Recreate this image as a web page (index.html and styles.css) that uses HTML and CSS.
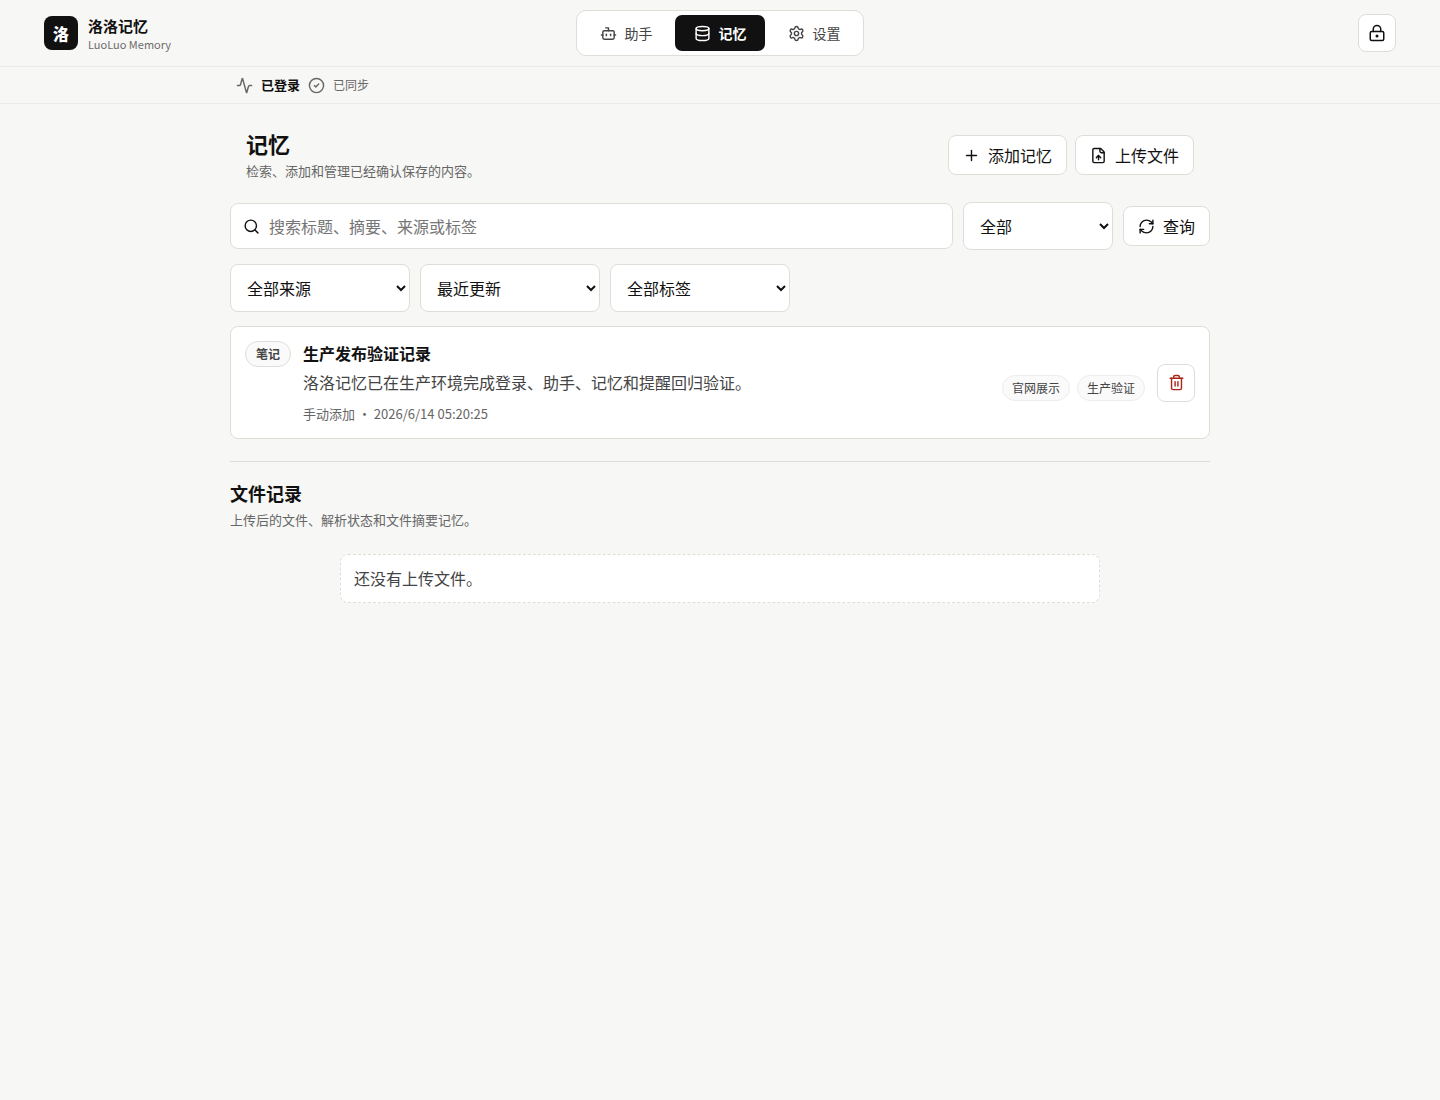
FILE: index.html
```html
<!DOCTYPE html>
<html lang="zh-CN">
<head>
    <meta charset="UTF-8">
    <meta name="viewport" content="width=device-width, initial-scale=1.0">
    <link rel="stylesheet" href="styles.css">
    <title>洛洛记忆</title>
</head>
<body>
    <header class="topbar">
        <div class="brand">
            <div class="logo">洛</div>
            <div class="brand-text">
                <div class="brand-name">洛洛记忆</div>
                <div class="brand-sub">LuoLuo Memory</div>
            </div>
        </div>
        <nav class="tabs">
            <button class="tab">
                <svg class="icon" viewBox="0 0 24 24"><path d="M12 8V4H8"/><rect width="16" height="12" x="4" y="8" rx="2"/><path d="M2 14h2"/><path d="M20 14h2"/><path d="M15 13v2"/><path d="M9 13v2"/></svg>
                助手
            </button>
            <button class="tab active">
                <svg class="icon" viewBox="0 0 24 24"><ellipse cx="12" cy="5" rx="9" ry="3"/><path d="M3 5V19A9 3 0 0 0 21 19V5"/><path d="M3 12A9 3 0 0 0 21 12"/></svg>
                记忆
            </button>
            <button class="tab">
                <svg class="icon" viewBox="0 0 24 24"><path d="M9.671 4.136a2.34 2.34 0 0 1 4.659 0 2.34 2.34 0 0 0 3.319 1.915 2.34 2.34 0 0 1 2.33 4.033 2.34 2.34 0 0 0 0 3.831 2.34 2.34 0 0 1-2.33 4.033 2.34 2.34 0 0 0-3.319 1.915 2.34 2.34 0 0 1-4.659 0 2.34 2.34 0 0 0-3.32-1.915 2.34 2.34 0 0 1-2.33-4.033 2.34 2.34 0 0 0 0-3.831A2.34 2.34 0 0 1 6.35 6.051a2.34 2.34 0 0 0 3.319-1.915"/><circle cx="12" cy="12" r="3"/></svg>
                设置
            </button>
        </nav>
        <button class="icon-button lock" aria-label="锁定">
            <svg class="icon icon-lg" viewBox="0 0 24 24"><circle cx="12" cy="16" r="1"/><rect x="3" y="10" width="18" height="12" rx="2"/><path d="M7 10V7a5 5 0 0 1 10 0v3"/></svg>
        </button>
    </header>

    <div class="status">
        <div class="status-inner">
            <svg class="icon" viewBox="0 0 24 24"><path d="M22 12h-2.48a2 2 0 0 0-1.93 1.46l-2.35 8.36a.25.25 0 0 1-.48 0L9.24 2.18a.25.25 0 0 0-.48 0l-2.35 8.36A2 2 0 0 1 4.49 12H2"/></svg>
            <strong>已登录</strong>
            <svg class="icon" viewBox="0 0 24 24"><circle cx="12" cy="12" r="10"/><path d="m9 12 2 2 4-4"/></svg>
            <span>已同步</span>
        </div>
    </div>

    <main class="page">
        <div class="page-head">
            <div>
                <h1>记忆</h1>
                <p class="hint">检索、添加和管理已经确认保存的内容。</p>
            </div>
            <div class="actions">
                <button class="button">
                    <svg class="icon" viewBox="0 0 24 24"><path d="M5 12h14"/><path d="M12 5v14"/></svg>
                    添加记忆
                </button>
                <button class="button">
                    <svg class="icon" viewBox="0 0 24 24"><path d="M15 2H6a2 2 0 0 0-2 2v16a2 2 0 0 0 2 2h12a2 2 0 0 0 2-2V7Z"/><path d="M14 2v4a2 2 0 0 0 2 2h4"/><path d="M12 12v6"/><path d="m15 15-3-3-3 3"/></svg>
                    上传文件
                </button>
            </div>
        </div>

        <div class="search-row">
            <label class="search">
                <svg class="icon" viewBox="0 0 24 24"><circle cx="11" cy="11" r="8"/><path d="m21 21-4.34-4.34"/></svg>
                <input type="text" placeholder="搜索标题、摘要、来源或标签" aria-label="搜索">
            </label>
            <select class="type" aria-label="类型">
                <option>全部</option>
            </select>
            <button class="button">
                <svg class="icon" viewBox="0 0 24 24"><path d="M3 12a9 9 0 0 1 9-9 9.75 9.75 0 0 1 6.74 2.74L21 8"/><path d="M21 3v5h-5"/><path d="M21 12a9 9 0 0 1-9 9 9.75 9.75 0 0 1-6.74-2.74L3 16"/><path d="M8 16H3v5"/></svg>
                查询
            </button>
        </div>

        <div class="filters">
            <select aria-label="来源">
                <option>全部来源</option>
            </select>
            <select aria-label="排序">
                <option>最近更新</option>
            </select>
            <select aria-label="标签">
                <option>全部标签</option>
            </select>
        </div>

        <article class="memory">
            <span class="pill kind">笔记</span>
            <div class="memory-body">
                <h3>生产发布验证记录</h3>
                <p>洛洛记忆已在生产环境完成登录、助手、记忆和提醒回归验证。</p>
                <div class="meta">手动添加 · 2026/6/14 05:20:25</div>
            </div>
            <div class="tags">
                <span class="pill">官网展示</span>
                <span class="pill">生产验证</span>
            </div>
            <button class="icon-button danger" aria-label="删除">
                <svg class="icon" viewBox="0 0 24 24"><path d="M3 6h18"/><path d="M19 6v14a2 2 0 0 1-2 2H7a2 2 0 0 1-2-2V6"/><path d="M8 6V4a2 2 0 0 1 2-2h4a2 2 0 0 1 2 2v2"/><path d="M10 11v6"/><path d="M14 11v6"/></svg>
            </button>
        </article>

        <section class="files">
            <h2>文件记录</h2>
            <p class="hint">上传后的文件、解析状态和文件摘要记忆。</p>
            <div class="empty">还没有上传文件。</div>
        </section>
    </main>
</body>
</html>
```

FILE: styles.css
```css
* {
    box-sizing: border-box;
}

body {
    margin: 0;
    min-height: 100vh;
    background: #f7f7f5;
    color: #111;
    font-family: "Noto Sans CJK SC", sans-serif;
    font-size: 16px;
    line-height: 24px;
}

h1, h2, h3, p {
    margin: 0;
}

button, input, select {
    font: inherit;
    color: inherit;
}

button {
    cursor: pointer;
}

.icon {
    width: 17px;
    height: 17px;
    flex: none;
    fill: none;
    stroke: currentColor;
    stroke-width: 2;
    stroke-linecap: round;
    stroke-linejoin: round;
}

.icon-lg {
    width: 18px;
    height: 18px;
}

/* top bar */
.topbar {
    display: grid;
    grid-template-columns: 1fr auto 1fr;
    align-items: center;
    padding: 10px 44px;
    border-bottom: 1px solid #ebebe8;
}

.brand {
    display: flex;
    align-items: center;
    gap: 10px;
}

.logo {
    display: grid;
    place-items: center;
    width: 34px;
    height: 34px;
    border-radius: 8px;
    background: #111;
    color: #fff;
    font-weight: 800;
}

.brand-text {
    padding-top: 2px;
}

.brand-name {
    font-size: 15px;
    font-weight: 700;
    line-height: 19px;
}

.brand-sub {
    color: #6b6b6b;
    font-size: 11px;
    line-height: 18px;
}

.tabs {
    display: flex;
    gap: 4px;
    padding: 4px;
    border: 1px solid #deded9;
    border-radius: 10px;
    background: #fff;
}

.tab {
    display: flex;
    align-items: center;
    justify-content: center;
    gap: 8px;
    width: 90px;
    height: 36px;
    padding: 0;
    border: 0;
    border-radius: 7px;
    background: none;
    color: #444;
    font-size: 14px;
}

.tab.active {
    background: #111;
    color: #fff;
    font-weight: 700;
}

.icon-button {
    display: grid;
    place-items: center;
    width: 38px;
    height: 38px;
    padding: 0;
    border: 1px solid #deded9;
    border-radius: 8px;
    background: #fff;
}

.lock {
    justify-self: end;
}

.danger {
    color: #a8261c;
}

/* status line */
.status {
    border-bottom: 1px solid #ebebe8;
}

.status-inner {
    display: flex;
    align-items: center;
    gap: 8px;
    max-width: 980px;
    height: 36px;
    margin: 0 auto;
    padding: 0 6px;
    color: #666;
    font-size: 12px;
}

.status-inner strong {
    color: #111;
    font-size: 13px;
}

/* page */
.page {
    max-width: 980px;
    margin: 0 auto;
    padding: 24px 0;
}

.page-head {
    display: flex;
    align-items: center;
    justify-content: space-between;
    padding: 0 16px;
    margin-bottom: 20px;
}

h1 {
    font-size: 22px;
    line-height: 30px;
}

.hint {
    margin-top: 2px;
    color: #666;
    font-size: 13px;
    line-height: 22px;
}

.actions {
    display: flex;
    gap: 8px;
}

.button {
    display: flex;
    align-items: center;
    gap: 8px;
    height: 40px;
    padding: 0 14px;
    border: 1px solid #deded9;
    border-radius: 8px;
    background: #fff;
    white-space: nowrap;
}

.search-row {
    display: flex;
    align-items: center;
    gap: 10px;
}

.search {
    display: flex;
    flex: 1;
    align-items: center;
    gap: 9px;
    height: 46px;
    padding: 0 12px;
    border: 1px solid #deded9;
    border-radius: 8px;
    background: #fff;
}

.search input {
    flex: 1;
    min-width: 0;
    padding: 0;
    border: 0;
    outline: 0;
    background: none;
}

.search input::placeholder {
    color: #757575;
}

select {
    width: 180px;
    height: 48px;
    padding: 0 12px;
    border: 1px solid #deded9;
    border-radius: 8px;
    background: #fff;
}

select.type {
    width: 150px;
}

.filters {
    display: flex;
    gap: 10px;
    margin: 14px 0;
}

.memory {
    display: flex;
    align-items: center;
    gap: 12px;
    padding: 14px;
    border: 1px solid #deded9;
    border-radius: 8px;
    background: #fff;
}

.pill {
    padding: 0 9px;
    border: 1px solid #ededed;
    border-radius: 13px;
    background: #fafafa;
    color: #444;
    font-size: 12px;
    line-height: 24px;
    white-space: nowrap;
}

.kind {
    align-self: flex-start;
    padding: 0 10px;
    border-color: #deded9;
    font-weight: 700;
}

.memory-body {
    flex: 1;
}

.memory-body h3 {
    font-size: 16px;
    line-height: 24px;
}

.memory-body p {
    margin-top: 4px;
    color: #444;
    line-height: 26px;
}

.meta {
    margin-top: 8px;
    color: #666;
    font-size: 13px;
    line-height: 21px;
}

.tags {
    display: flex;
    gap: 7px;
    margin-top: 10px;
}

.files {
    margin-top: 22px;
    padding-top: 18px;
    border-top: 1px solid #deded9;
}

h2 {
    font-size: 18px;
    line-height: 27px;
}

.empty {
    max-width: 760px;
    margin: 23px auto 0;
    padding: 12px 13px;
    border: 1px dashed #deded9;
    border-radius: 8px;
    background: #fff;
    color: #444;
    line-height: 23px;
}
```
